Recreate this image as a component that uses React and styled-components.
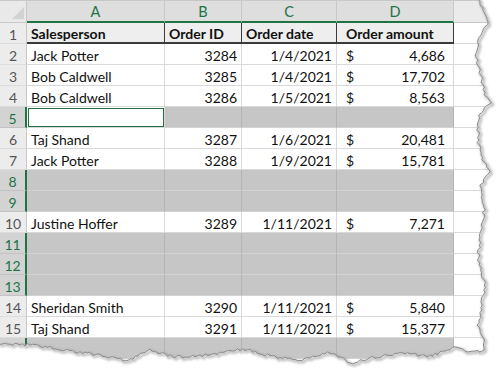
import React from "react";
import styled, { createGlobalStyle } from "styled-components";

const GREEN = "#217346";
const GRID = "#d9d9d9";

const GlobalStyle = createGlobalStyle`
  html, body {
    margin: 0;
    padding: 0;
    background: #fff;
  }
  body {
    font-family: Lato, "Liberation Sans", sans-serif;
  }
`;

const COLUMNS = [
  { key: "A", width: 138 },
  { key: "B", width: 77 },
  { key: "C", width: 95 },
  { key: "D", width: 117 },
];

const ROWS = [
  { n: 1, header: true, cells: ["Salesperson", "Order ID", "Order date", "Order amount"] },
  { n: 2, cells: ["Jack Potter", "3284", "1/4/2021", "4,686"] },
  { n: 3, cells: ["Bob Caldwell", "3285", "1/4/2021", "17,702"] },
  { n: 4, cells: ["Bob Caldwell", "3286", "1/5/2021", "8,563"] },
  { n: 5, blank: true, active: true },
  { n: 6, cells: ["Taj Shand", "3287", "1/6/2021", "20,481"] },
  { n: 7, cells: ["Jack Potter", "3288", "1/9/2021", "15,781"] },
  { n: 8, blank: true },
  { n: 9, blank: true },
  { n: 10, cells: ["Justine Hoffer", "3289", "1/11/2021", "7,271"] },
  { n: 11, blank: true },
  { n: 12, blank: true },
  { n: 13, blank: true },
  { n: 14, cells: ["Sheridan Smith", "3290", "1/11/2021", "5,840"] },
  { n: 15, cells: ["Taj Shand", "3291", "1/11/2021", "15,377"] },
  { n: 16, blank: true },
];

const Frame = styled.div`
  position: relative;
  width: 500px;
  height: 373px;
  overflow: hidden;
  background: #fff;
`;

const Sheet = styled.div`
  display: flex;
  flex-direction: column;
  width: 520px;
  color: #111;
`;

const HeaderRow = styled.div`
  display: flex;
  height: 23px;
  box-sizing: border-box;
  border-top: 1px solid #c8c8c8;
`;

const Corner = styled.div`
  width: 27px;
  flex: none;
  box-sizing: border-box;
  background: #e9e9e9;
  border-right: 1px solid #c8c8c8;
  border-bottom: 1px solid #c8c8c8;
  display: flex;
  align-items: flex-end;
  justify-content: flex-end;
  padding: 0 2px 3px 0;
`;

const CornerMark = styled.div`
  width: 0;
  height: 0;
  border-left: 12px solid transparent;
  border-bottom: 12px solid #d2d2d2;
`;

const ColHead = styled.div`
  width: ${(p) => (p.$width ? `${p.$width}px` : "auto")};
  flex: ${(p) => (p.$width ? "none" : "1")};
  box-sizing: border-box;
  background: ${(p) => (p.$selected ? "#dedede" : "#ebebeb")};
  color: ${(p) => (p.$selected ? GREEN : "#444")};
  border-right: 1px solid #c8c8c8;
  border-bottom: ${(p) => (p.$selected ? `2px solid ${GREEN}` : "1px solid #c8c8c8")};
  font-size: 14.5px;
  line-height: 20px;
  text-align: center;
  padding-top: 1px;
`;

const Row = styled.div`
  display: flex;
  height: 21px;
`;

const RowHead = styled.div`
  width: 27px;
  flex: none;
  box-sizing: border-box;
  background: ${(p) => (p.$selected ? "#d3d3d3" : "#ececec")};
  color: ${(p) => (p.$selected ? GREEN : "#555")};
  border-right: ${(p) => (p.$selected ? `2px solid ${GREEN}` : "1px solid #c8c8c8")};
  border-bottom: 1px solid ${(p) => (p.$selected ? "#c2c2c2" : "#dcdcdc")};
  display: flex;
  align-items: flex-end;
  justify-content: center;
  font-size: 14px;
  line-height: 16px;
`;

const Cell = styled.div`
  width: ${(p) => (p.$width ? `${p.$width}px` : "auto")};
  flex: ${(p) => (p.$width ? "none" : "1")};
  box-sizing: border-box;
  display: flex;
  align-items: flex-end;
  justify-content: ${(p) => p.$justify || "flex-start"};
  padding: ${(p) => p.$pad || "0 4px"};
  font-size: 14px;
  line-height: 16px;
  white-space: nowrap;
  overflow: hidden;
  background: ${(p) => (p.$selected ? "#c6c6c6" : p.$header ? "#eeeeee" : "#fff")};
  border-right: 1px solid ${(p) => (p.$dark ? "#3a3a3a" : p.$selected ? "#b5b5b5" : GRID)};
  border-bottom: ${(p) =>
    p.$dark ? "2px solid #3a3a3a" : `1px solid ${p.$selected ? "#d2d2d2" : GRID}`};
  font-weight: ${(p) => (p.$header ? 700 : 400)};
  outline: ${(p) => (p.$active ? `1px solid ${GREEN}` : "none")};
  outline-offset: -2px;
`;

const Tear = styled.svg`
  position: absolute;
  left: 0;
  top: 0;
  pointer-events: none;
`;

function rng(seed) {
  let s = seed;
  return () => {
    s = (s * 16807) % 2147483647;
    return (s - 1) / 2147483646;
  };
}

// rough anchors of the torn edge, filled in with small jitter
const RIGHT = [
  [479, -2], [483, 10], [489, 22], [480, 35], [476, 55], [481, 75], [484, 92],
  [490, 103], [478, 115], [478, 140], [482, 160], [490, 172], [481, 185],
  [484, 210], [480, 235], [478, 260], [485, 285], [482, 305], [478, 325],
  [484, 340], [484, 350],
];
const BOTTOM = [
  [484, 350], [470, 352], [455, 348], [430, 356], [400, 353], [370, 358],
  [350, 363], [330, 352], [300, 361], [270, 356], [245, 349], [225, 352],
  [200, 356], [175, 357], [150, 350], [128, 361], [100, 355], [70, 351],
  [40, 346], [15, 344], [-2, 343],
];

function jagged(anchors, vertical, seed) {
  const rand = rng(seed);
  const pts = [];
  for (let i = 0; i < anchors.length - 1; i++) {
    const [x0, y0] = anchors[i];
    const [x1, y1] = anchors[i + 1];
    const len = vertical ? Math.abs(y1 - y0) : Math.abs(x1 - x0);
    const steps = Math.max(1, Math.round(len / 2.5));
    for (let k = 0; k < steps; k++) {
      const t = k / steps;
      const jit = (rand() - 0.5) * 3;
      const x = x0 + (x1 - x0) * t + (vertical ? jit : 0);
      const y = y0 + (y1 - y0) * t + (vertical ? 0 : jit);
      pts.push([x, y]);
    }
  }
  pts.push(anchors[anchors.length - 1]);
  return pts;
}

const edge = [...jagged(RIGHT, true, 11), ...jagged(BOTTOM, false, 29).slice(1)];
const edgeD = edge.map(([x, y], i) => `${i ? "L" : "M"}${x.toFixed(1)} ${y.toFixed(1)}`).join(" ");
const outsideD = `${edgeD} L-2 380 L510 380 L510 -2 Z`;

const TornEdge = () => (
  <Tear width="500" height="373" viewBox="0 0 500 373">
    <defs>
      <filter id="blur" x="-10%" y="-10%" width="120%" height="120%">
        <feGaussianBlur stdDeviation="1.2" />
      </filter>
    </defs>
    <path d={outsideD} fill="#fff" />
    <path
      d={edgeD}
      fill="none"
      stroke="#9a9a9a"
      strokeWidth="3"
      opacity="0.6"
      filter="url(#blur)"
      transform="translate(1.5 1.5)"
    />
    <path d={edgeD} fill="none" stroke="#8c8c8c" strokeWidth="1" />
  </Tear>
);

const DataCells = ({ row }) => {
  const sel = !!row.blank;
  if (row.header) {
    return (
      <>
        <Cell $width={138} $header $dark>{row.cells[0]}</Cell>
        <Cell $width={77} $header $dark>{row.cells[1]}</Cell>
        <Cell $width={95} $header $dark>{row.cells[2]}</Cell>
        <Cell $width={117} $header $dark $pad="0 4px 0 9px">{row.cells[3]}</Cell>
        <Cell />
      </>
    );
  }
  const c = row.cells || ["", "", "", ""];
  return (
    <>
      <Cell $width={138} $selected={sel && !row.active} $active={row.active}>{c[0]}</Cell>
      <Cell $width={77} $selected={sel} $justify="flex-end">{c[1]}</Cell>
      <Cell $width={95} $selected={sel} $justify="flex-end">{c[2]}</Cell>
      <Cell $width={117} $selected={sel} $justify="space-between" $pad="0 8px 0 9px">
        {row.cells && <span>$</span>}
        {row.cells && <span>{c[3]}</span>}
      </Cell>
      <Cell />
    </>
  );
};

export default function App() {
  return (
    <Frame>
      <GlobalStyle />
      <Sheet>
        <HeaderRow>
          <Corner>
            <CornerMark />
          </Corner>
          {COLUMNS.map((col) => (
            <ColHead key={col.key} $width={col.width} $selected>
              {col.key}
            </ColHead>
          ))}
          <ColHead />
        </HeaderRow>
        {ROWS.map((row) => (
          <Row key={row.n}>
            <RowHead $selected={!!row.blank}>{row.n}</RowHead>
            <DataCells row={row} />
          </Row>
        ))}
      </Sheet>
      <TornEdge />
    </Frame>
  );
}
